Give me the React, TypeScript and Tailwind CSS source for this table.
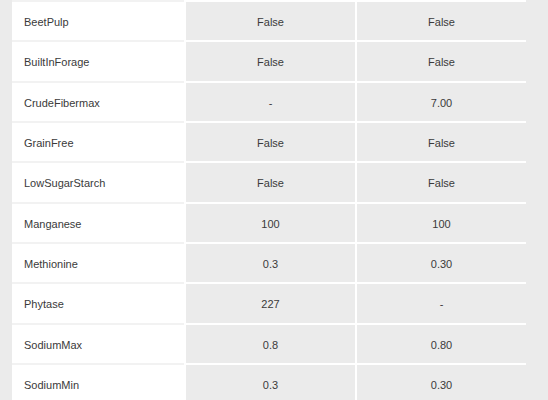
const rows: [string, string, string][] = [
  ["BeetPulp", "False", "False"],
  ["BuiltInForage", "False", "False"],
  ["CrudeFibermax", "-", "7.00"],
  ["GrainFree", "False", "False"],
  ["LowSugarStarch", "False", "False"],
  ["Manganese", "100", "100"],
  ["Methionine", "0.3", "0.30"],
  ["Phytase", "227", "-"],
  ["SodiumMax", "0.8", "0.80"],
  ["SodiumMin", "0.3", "0.30"],
];

export default function App() {
  return (
    <div className="h-[400px] w-[548px] overflow-hidden bg-[#ebebeb] pl-3 font-['Liberation_Sans',Arial,sans-serif] text-[11px] text-[#3a3a3a]">
      <div className="flex w-[514px] flex-col">
        {rows.map(([name, a, b]) => (
          <div key={name} className="flex h-[40.33px]">
            <div className="flex w-[172px] items-center border-t-2 border-[#f2f2f2] bg-white px-3 pt-[2px]">
              {name}
            </div>
            <div className="flex w-[171px] items-center justify-center border-t-2 border-l-2 border-white bg-[#ebebeb] pt-[2px]">
              {a}
            </div>
            <div className="flex w-[171px] items-center justify-center border-t-2 border-l-2 border-white bg-[#ebebeb] pt-[2px]">
              {b}
            </div>
          </div>
        ))}
      </div>
    </div>
  );
}
